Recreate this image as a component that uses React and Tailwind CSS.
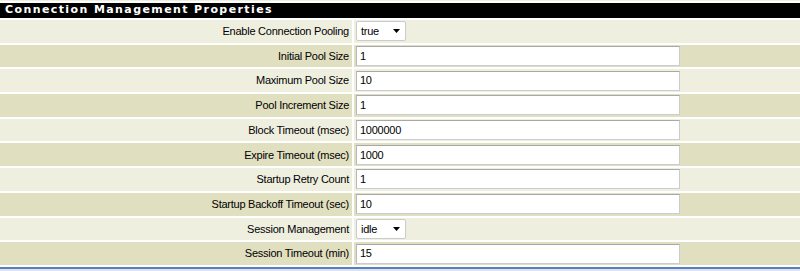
import React from 'react';

const rows = [
    { label: 'Enable Connection Pooling', value: 'true', select: true },
    { label: 'Initial Pool Size', value: '1' },
    { label: 'Maximum Pool Size', value: '10' },
    { label: 'Pool Increment Size', value: '1' },
    { label: 'Block Timeout (msec)', value: '1000000' },
    { label: 'Expire Timeout (msec)', value: '1000' },
    { label: 'Startup Retry Count', value: '1' },
    { label: 'Startup Backoff Timeout (sec)', value: '10' },
    { label: 'Session Management', value: 'idle', select: true },
    { label: 'Session Timeout (min)', value: '15' },
];

function Select({ value }) {
    return (
        <div className="flex items-center justify-between w-[50px] h-[20px] bg-white border border-[#c8cbd0] rounded-[2px] pl-[4px] pr-[5px]">
            <span>{value}</span>
            <svg width="7" height="4" viewBox="0 0 7 4">
                <path d="M0 0h7L3.5 4z" fill="#000" />
            </svg>
        </div>
    );
}

export default function App() {
    return (
        <div className="w-[800px] h-[271px] bg-white overflow-hidden text-[11px] text-black tracking-[-0.25px]" style={{ fontFamily: '"Liberation Sans", Arial, sans-serif' }}>
            <div className="h-[1px] bg-[#efefe0]" />
            <div className="flex flex-col gap-[2px] pt-[2px]">
                {/* Header */}
                <div className="h-[15px] bg-black text-white font-bold tracking-[1.4px] pl-[5px] flex items-center text-[11px]" style={{ fontFamily: '"DejaVu Sans", Verdana, sans-serif' }}>
                    Connection Management Properties
                </div>

                {rows.map((row, i) => (
                    <div key={row.label} className="flex gap-[2px] h-[22.7px]">
                        <div className={`w-[352px] flex items-center justify-end pr-[3px] ${i % 2 === 0 ? 'bg-[#efefe0]' : 'bg-[#e0dfc0]'}`}>
                            {row.label}
                        </div>
                        <div className={`flex-1 flex items-center pl-[2px] ${i % 2 === 0 ? 'bg-[#efefe0]' : 'bg-[#e0dfc0]'}`}>
                            {row.select ? (
                                <Select value={row.value} />
                            ) : (
                                <div className="w-[324px] h-[20px] bg-white border border-[#c9ccd3] border-t-[#a8a8a8] border-l-[#b8b8b8] pl-[3px] flex items-center">
                                    {row.value}
                                </div>
                            )}
                        </div>
                    </div>
                ))}
            </div>
            <div className="mt-[2px] h-[2px] bg-[#5b7fbe]" />
            <div className="h-[2px] bg-[#dce4f2]" />
        </div>
    );
}
